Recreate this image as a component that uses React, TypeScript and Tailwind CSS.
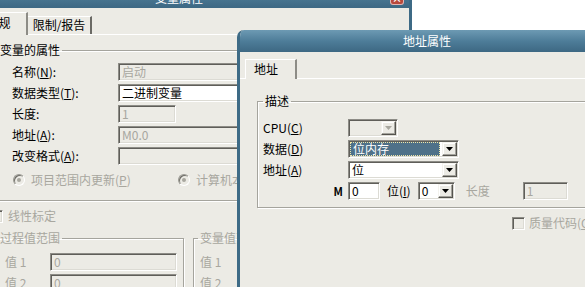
import type { ReactNode } from 'react'

const sunken =
  'border border-t-[#8d8c86] border-l-[#8d8c86] border-b-white border-r-white shadow-[inset_1px_1px_0_#5f5e59,inset_-1px_-1px_0_#dcdbd4]'
const raised =
  'border border-t-[#f4f3ee] border-l-[#f4f3ee] border-b-[#54534e] border-r-[#54534e] shadow-[inset_-1px_-1px_0_#a3a29b,inset_1px_1px_0_#ffffff]'
const dim = 'text-[#a8a79f]'

function Key({ c }: { c: string }) {
  return <span className="underline underline-offset-1">{c}</span>
}

function Arrow({ disabled }: { disabled?: boolean }) {
  return (
    <svg width="7" height="4" viewBox="0 0 7 4">
      <path d="M0 0h7L3.5 4z" fill={disabled ? '#a8a79f' : '#000'} />
    </svg>
  )
}

function DropBtn({ disabled }: { disabled?: boolean }) {
  return (
    <div className={`flex h-[14px] w-[15px] shrink-0 items-center justify-center bg-[#ecebe5] ${raised}`}>
      <Arrow disabled={disabled} />
    </div>
  )
}

function Field({ w, value, disabled }: { w: string; value?: string; disabled?: boolean }) {
  return (
    <div
      className={`flex h-[18px] ${w} items-center pl-[3px] leading-none ${sunken} ${
        disabled ? `bg-[#ecebe5] ${dim}` : 'bg-white text-black'
      }`}
    >
      {value}
    </div>
  )
}

function Combo({
  w,
  value,
  selected,
  disabled,
}: {
  w: string
  value?: string
  selected?: boolean
  disabled?: boolean
}) {
  return (
    <div
      className={`flex h-[18px] ${w} items-center gap-[1px] pr-[1px] ${sunken} ${
        disabled ? 'bg-[#ecebe5]' : 'bg-white'
      }`}
    >
      <div className="flex h-full flex-1 items-center p-[1px]">
        {selected ? (
          <div className="flex h-full w-full items-center border border-dotted border-[#f0e6a8] bg-[#4f7189] pl-[2px] leading-none text-white">
            {value}
          </div>
        ) : (
          <span className="pl-[2px] leading-none">{value}</span>
        )}
      </div>
      <DropBtn disabled={disabled} />
    </div>
  )
}

function Radio() {
  return (
    <span className="flex h-[12px] w-[12px] items-center justify-center rounded-full border border-[#9a9993] border-b-white border-r-white bg-[#ecebe5] shadow-[inset_1px_1px_0_#6d6c66]">
      <span className="h-[4px] w-[4px] rounded-full bg-[#a8a79f]" />
    </span>
  )
}

function Check() {
  return (
    <span className={`block h-[13px] w-[13px] shrink-0 bg-[#ecebe5] ${sunken}`} />
  )
}

function Group({
  title,
  className,
  legendClass,
  children,
}: {
  title: string
  className: string
  legendClass: string
  children: ReactNode
}) {
  return (
    <fieldset
      className={`border border-[#a5a49d] shadow-[1px_1px_0_#ffffff,inset_1px_1px_0_#ffffff] ${className}`}
    >
      <legend className={`px-[2px] leading-[14px] ${legendClass}`}>{title}</legend>
      {children}
    </fieldset>
  )
}

function TitleBar({ title, h, className, children }: { title: string; h: string; className: string; children?: ReactNode }) {
  return (
    <div
      className={`relative flex ${h} shrink-0 justify-center bg-gradient-to-b from-[#6d9ab3] via-[#4e7d99] to-[#3d6883] text-[12px] text-white ${className}`}
    >
      <span className="leading-none">{title}</span>
      {children}
    </div>
  )
}

function BackWindow() {
  return (
    <div className="absolute left-[-40px] top-[-22px] flex h-[330px] w-[452px] flex-col border-x-[3px] border-[#3d6a85] bg-[#ecebe5]">
      <TitleBar title="变量属性" h="h-[30px]" className="items-end pb-[4px] pr-[14px]">
        <div className="absolute right-[5px] top-[13px] flex h-[14px] w-[14px] items-center justify-center rounded-[3px] border border-white/60 bg-[#b8483c] text-[10px] font-bold text-white">
          ×
        </div>
      </TitleBar>

      <div className="flex h-[26px] shrink-0 items-end pl-[7px]">
        <div className="relative z-10 -mb-px flex h-[23px] w-[58px] items-center justify-center border-l border-t border-white border-r-[2px] border-r-[#8d8c86] bg-[#ecebe5] pb-[2px]">
          常规
        </div>
        <div className="flex h-[18px] w-[64px] items-center justify-center border-t border-white border-r-[2px] border-r-[#6b6a65] pb-[1px]">
          限制/报告
        </div>
      </div>

      <div className="flex flex-1 flex-col border-t border-white pl-[27px]">
        <Group title="变量的属性" className="mt-[8px] h-[158px] w-[410px]" legendClass="ml-[7px]">
          <div className="mt-[6px] flex flex-col gap-[3px] pl-[21px]">
            <div className="flex items-center">
              <span className="w-[106px]">
                名称(<Key c="N" />):
              </span>
              <Field w="w-[200px]" value="启动" disabled />
            </div>
            <div className="flex items-center">
              <span className="w-[106px]">
                数据类型(<Key c="T" />):
              </span>
              <Field w="w-[200px]" value="二进制变量" />
            </div>
            <div className="flex items-center">
              <span className="w-[106px]">长度:</span>
              <Field w="w-[58px]" value="1" disabled />
            </div>
            <div className="flex items-center">
              <span className="w-[106px]">
                地址(<Key c="A" />):
              </span>
              <Field w="w-[200px]" value="M0.0" disabled />
            </div>
            <div className="flex items-center">
              <span className="w-[106px]">
                改变格式(<Key c="A" />):
              </span>
              <Field w="w-[200px]" disabled />
            </div>
            <div className={`ml-[1px] mt-[5px] flex h-[14px] items-center ${dim}`}>
              <div className="flex w-[165px] items-center gap-[6px]">
                <Radio />
                <span>
                  项目范围内更新(<Key c="P" />)
                </span>
              </div>
              <div className="flex items-center gap-[6px]">
                <Radio />
                <span>计算机本地更新</span>
              </div>
            </div>
          </div>
        </Group>

        <div className={`mt-[8px] flex h-[14px] items-center gap-[5px] ${dim}`}>
          <Check />
          <span>线性标定</span>
        </div>

        <div className={`mt-[8px] flex gap-[9px] ${dim}`}>
          <Group title="过程值范围" className="h-[80px] w-[194px]" legendClass="ml-[7px]">
            <div className="mt-[8px] flex flex-col gap-[3px] pl-[14px]">
              <div className="flex items-center">
                <span className="w-[45px]">值 1</span>
                <Field w="w-[127px]" value="0" disabled />
              </div>
              <div className="flex items-center">
                <span className="w-[45px]">值 2</span>
                <Field w="w-[127px]" value="0" disabled />
              </div>
            </div>
          </Group>
          <Group title="变量值范围" className="h-[80px] w-[200px]" legendClass="ml-[4px]">
            <div className="mt-[8px] flex flex-col gap-[3px] pl-[6px]">
              <div className="flex items-center">
                <span className="w-[45px]">值 1</span>
                <Field w="w-[127px]" value="0" disabled />
              </div>
              <div className="flex items-center">
                <span className="w-[45px]">值 2</span>
                <Field w="w-[127px]" value="0" disabled />
              </div>
            </div>
          </Group>
        </div>
      </div>
    </div>
  )
}

function FrontWindow() {
  return (
    <div className="absolute left-[237px] top-[30px] flex h-[270px] w-[360px] flex-col overflow-hidden rounded-tl-[7px] border-l-[3px] border-[#3e6b86] bg-[#ecebe5]">
      <TitleBar title="地址属性" h="h-[22px]" className="items-center pl-[17px]" />

      <div className="flex h-[26px] shrink-0 items-end pl-[5px]">
        <div className="relative z-10 -mb-px flex h-[20px] w-[52px] items-center border-l border-t border-white border-r-[2px] border-r-[#8d8c86] bg-[#ecebe5] pb-[1px] pl-[8px]">
          地址
        </div>
      </div>

      <div className="flex flex-1 flex-col border-t border-white pl-[17px]">
        <Group title="描述" className="mt-[15px] h-[114px] w-[340px]" legendClass="ml-[5px]">
          <div className="mt-[11px] flex flex-col gap-[3px] pl-[5px]">
            <div className="flex items-center">
              <span className="w-[85px]">
                CPU(<Key c="C" />)
              </span>
              <Combo w="w-[50px]" disabled />
            </div>
            <div className="flex items-center">
              <span className="w-[85px]">
                数据(<Key c="D" />)
              </span>
              <Combo w="w-[111px]" value="位内存" selected />
            </div>
            <div className="flex items-center">
              <span className="w-[85px]">
                地址(<Key c="A" />)
              </span>
              <Combo w="w-[111px]" value="位" />
            </div>
            <div className="flex items-center">
              <span className="flex w-[85px] justify-end pr-[5px] text-[11px] font-bold">M</span>
              <Field w="w-[32px]" value="0" />
              <span className="ml-[7px]">
                位(<Key c="I" />)
              </span>
              <div className="ml-[7px]">
                <Combo w="w-[37px]" value="0" />
              </div>
              <span className={`ml-[11px] ${dim}`}>长度</span>
              <div className="ml-[33px]">
                <Field w="w-[45px]" value="1" disabled />
              </div>
            </div>
          </div>
        </Group>

        <div className={`ml-[255px] mt-[6px] flex items-center gap-[4px] whitespace-nowrap ${dim}`}>
          <Check />
          <span>
            质量代码(<Key c="Q" />)
          </span>
        </div>
      </div>
    </div>
  )
}

export default function App() {
  return (
    <div className="relative h-[287px] w-[585px] overflow-hidden bg-white font-['Noto_Sans_CJK_SC','Noto_Sans',sans-serif] text-[12px] text-black">
      <BackWindow />
      <FrontWindow />
    </div>
  )
}
